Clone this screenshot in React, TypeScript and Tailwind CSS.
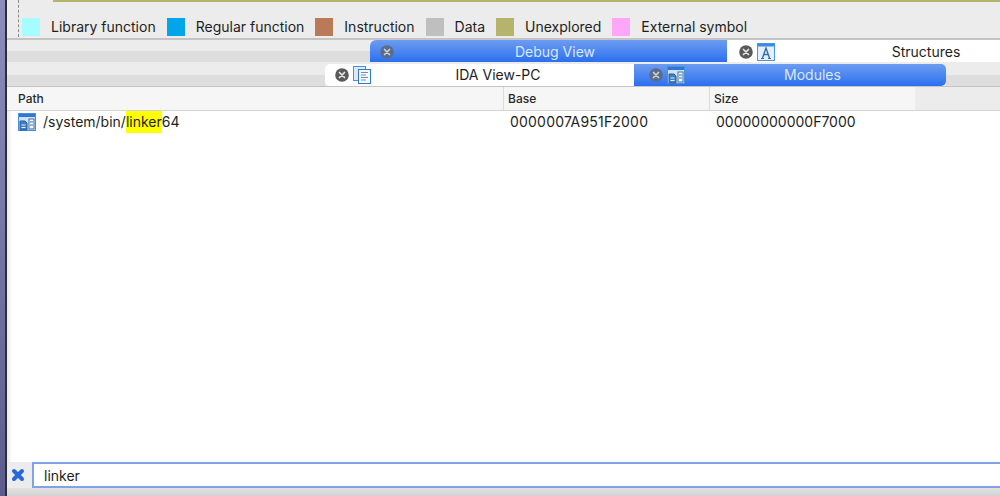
import React from "react";

const font = { fontFamily: '"Inter", "Liberation Sans", sans-serif' };

const legend = [
  { label: "Library function", color: "bg-[#a6fdff]", gap: "mr-[11px]" },
  { label: "Regular function", color: "bg-[#00a5ea]", gap: "mr-[11px]" },
  { label: "Instruction", color: "bg-[#b97a58]", gap: "mr-[11px]" },
  { label: "Data", color: "bg-[#bfbfbf]", gap: "mr-[11px]" },
  { label: "Unexplored", color: "bg-[#b6b36c]", gap: "mr-[11px]" },
  { label: "External symbol", color: "bg-[#ffa6f8]", gap: "" },
];

function CloseDot({ light }: { light?: boolean }) {
  return (
    <svg width="14" height="14" viewBox="0 0 14 14" className="shrink-0">
      <circle cx="7" cy="7" r="6.8" fill={light ? "#5d6c86" : "#5a5a5a"} />
      <path d="M4.5 4.5l5 5M9.500 4.5l-5 5" stroke={light ? "#c9d2e0" : "#e6e6e6"} strokeWidth="1.7" strokeLinecap="round" />
    </svg>
  );
}

function WindowFrame({ children }: { children: React.ReactNode }) {
  return (
    <svg width="18" height="18" viewBox="0 0 18 18" className="shrink-0">
      {children}
    </svg>
  );
}

function ListingIcon() {
  return (
    <WindowFrame>
      <rect x="0.5" y="0.5" width="12" height="14" fill="#dbe9fb" stroke="#4a8fdc" />
      <rect x="5.5" y="3.5" width="12" height="14" fill="#f7fbff" stroke="#2f78d2" />
      <path d="M8 6.5h7M8 9h5M8 11.5h7M8 14h5" stroke="#7a8ca6" strokeWidth="1" />
    </WindowFrame>
  );
}

function StructIcon() {
  return (
    <WindowFrame>
      <rect x="0.5" y="0.5" width="17" height="17" fill="#e4f0fd" stroke="#4a92e4" />
      <rect x="1" y="1" width="16" height="2.5" fill="#3f8ae0" />
      <path d="M5.5 15L9 5l3.500 10M6.800 11.500h4.400" fill="none" stroke="#3a6ca6" strokeWidth="1.4" />
      <path d="M4 15.500h3M11 15.500h3" stroke="#3a6ca6" strokeWidth="1" />
    </WindowFrame>
  );
}

function ModuleIcon() {
  return (
    <WindowFrame>
      <rect x="0.5" y="0.5" width="17" height="17" fill="#cfe2f8" stroke="#4a8fdc" />
      <rect x="1" y="1" width="16" height="3" fill="#2f78d2" />
      <rect x="11" y="6" width="5" height="10" fill="#f4f8fd" stroke="#3a6ea8" />
      <path d="M12 9h3M12 12h3" stroke="#3a6ea8" />
      <path d="M2 8h5l2 2v7H2z" fill="#3f7fc4" stroke="#2a5f9e" />
      <path d="M3.500 12h4M3.500 14.500h4" stroke="#e6f0fb" />
    </WindowFrame>
  );
}

function Band({ className }: { className: string }) {
  return (
    <div className={`flex flex-col justify-end ${className}`}>
      <div className="h-[11px] bg-[#dedede]" />
    </div>
  );
}

function Tab({ active, label, icon, className }: { active?: boolean; label: string; icon: React.ReactNode; className: string }) {
  return (
    <div
      className={`flex items-center shrink-0 ${className} ${
        active ? "bg-gradient-to-b from-[#6d9cf0] to-[#2a6ff0] text-[#dbe7fd]" : "bg-white text-[#1e1e1e]"
      }`}
    >
      <div className="flex items-center gap-[4px]">
        <CloseDot light={active} />
        {icon}
      </div>
      <span className="flex-1 text-center text-[14px] leading-none">{label}</span>
    </div>
  );
}

export default function App() {
  return (
    <div className="flex w-[1000px] h-[496px] overflow-hidden bg-[#ececec]" style={font}>
      <div className="w-[5px] bg-gradient-to-b from-[#8c8cbe] to-[#5c5c8e] shrink-0" />
      <div className="w-[2px] bg-[#2e2e36] shrink-0" />
      <div className="flex flex-col flex-1 min-w-0 overflow-hidden">
        {/* legend */}
        <div className="relative h-[38px] bg-[#ececec] border-b-2 border-[#c4c4c4] shrink-0 box-content">
          <div className="absolute left-[46px] right-0 top-0 h-[2px] bg-[#b6b36c]" />
          <div className="absolute left-[11px] top-0 h-[37px] border-l border-dashed border-[#8a8a8a]" />
          <div className="absolute left-[15px] top-[18px] flex items-center text-[14px] leading-none text-[#1e1e1e]">
            {legend.map((l) => (
              <div key={l.label} className={`flex items-center ${l.gap}`}>
                <div className={`w-[18px] h-[18px] ${l.color} mr-[11px]`} />
                <span>{l.label}</span>
              </div>
            ))}
          </div>
        </div>

        {/* tabs */}
        <div className="flex h-[22px] shrink-0">
          <Band className="w-[363px] shrink-0" />
          <Tab active label="Debug View" icon={null} className="w-[357px] rounded-tl-[6px] pl-[10px] pr-[11px] pt-[2px]" />
          <Tab label="Structures" icon={<StructIcon />} className="w-[350px] pl-[12px] pt-[2px]" />
        </div>
        <div className="flex h-[24px] pt-[2px] shrink-0 box-border">
          <Band className="w-[318px] shrink-0" />
          <Tab label="IDA View-PC" icon={<ListingIcon />} className="w-[309px] rounded-l-[5px] pl-[10px] pr-[9px]" />
          <Tab active label="Modules" icon={<ModuleIcon />} className="w-[312px] rounded-r-[5px] pl-[15px] pr-[6px]" />
          <Band className="flex-1" />
        </div>
        <div className="h-px bg-[#c4c4c4] shrink-0" />

        {/* table */}
        <div className="flex h-[23px] shrink-0 text-[12px] font-medium leading-none text-[#2a2a2a]">
          <div className="w-[908px] flex items-center bg-[#f6f6f6]">
            <div className="w-[497px] pl-[11px] border-r border-[#dcdcdc] h-full flex items-center">Path</div>
            <div className="w-[206px] pl-[4px] border-r border-[#dcdcdc] h-full flex items-center">Base</div>
            <div className="pl-[4px]">Size</div>
          </div>
        </div>
        <div className="h-px bg-[#d4d4d4] shrink-0" />
        <div className="flex flex-1 bg-white min-h-0">
          <div className="w-[5px] bg-gradient-to-r from-[#e8e8e8] to-white shrink-0" />
          <div className="flex flex-1 items-start min-w-0">
            <div className="flex items-center h-[22px] text-[14px] leading-none text-[#1e1e1e]">
              <div className="w-[492px] flex items-center pl-[6px] h-full">
                <ModuleIcon />
                <span className="ml-[7px]">/system/bin/</span>
                <span className="bg-[#ffff00] h-full flex items-center">linker</span>
                <span>64</span>
              </div>
              <div className="w-[206px] pl-[6px] tracking-[0.2px]">0000007A951F2000</div>
              <div className="pl-[6px]">00000000000F7000</div>
            </div>
          </div>
        </div>

        {/* filter */}
        <div className="flex items-stretch h-[26px] bg-[#e6e6e6] shrink-0">
          <div className="w-[25px] flex items-center pl-[4px] bg-[#ececec]">
            <svg width="14" height="14" viewBox="0 0 14 14">
              <path d="M3 3l8 8M11 3l-8 8" stroke="#2a68d8" strokeWidth="4" strokeLinecap="round" />
            </svg>
          </div>
          <div className="flex-1 bg-white border-2 border-r-0 border-[#7fa3e4] flex items-center pl-[10px] text-[14px] text-[#1e1e1e]">
            linker
          </div>
        </div>
        <div className="h-[8px] bg-gradient-to-b from-[#e2e2e2] to-[#d4d4d4] shrink-0" />
      </div>
    </div>
  );
}
